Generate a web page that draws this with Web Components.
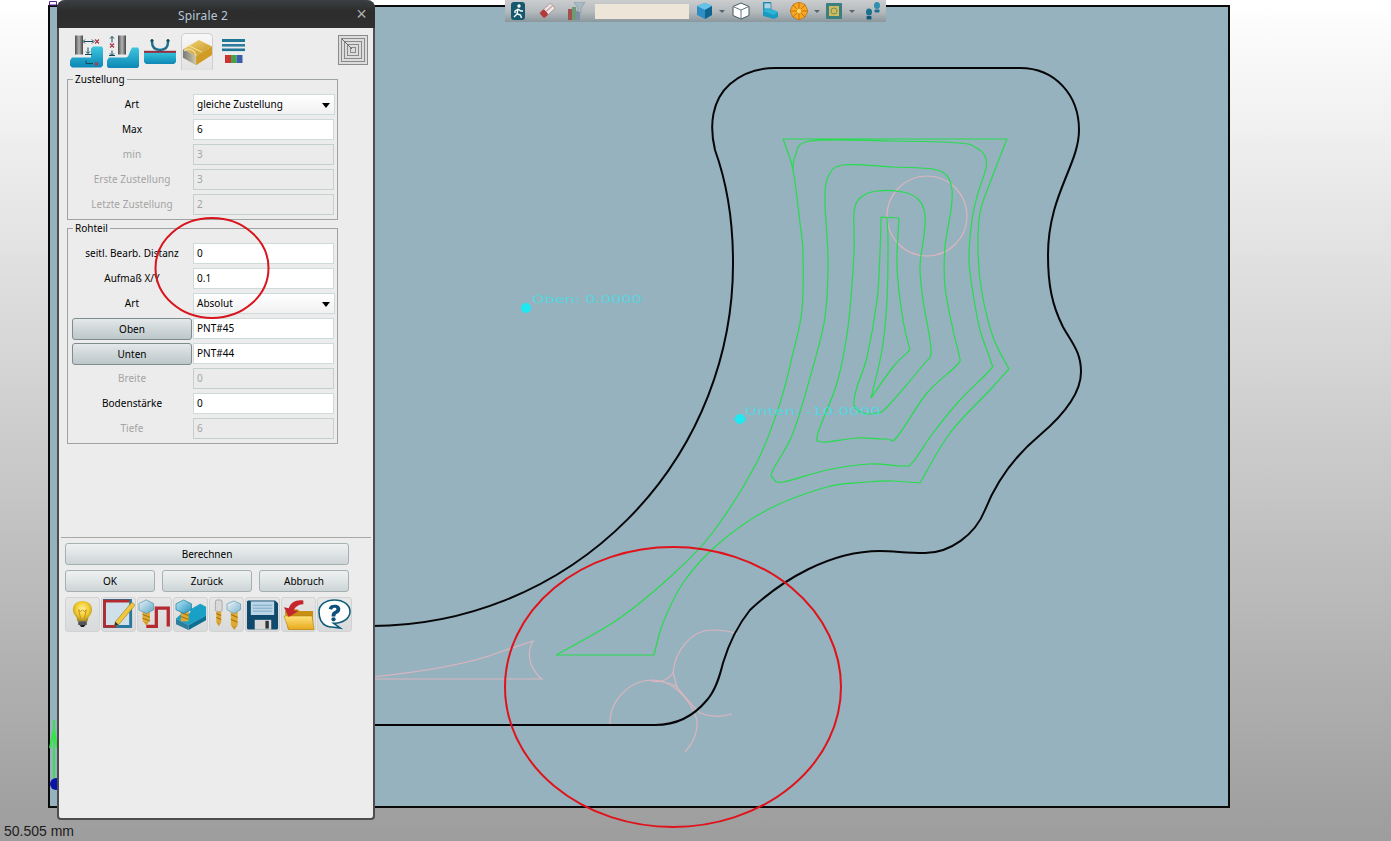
<!DOCTYPE html>
<html lang="de"><head><meta charset="utf-8"><title>Spirale 2</title>
<style>html,body{margin:0;padding:0;overflow:hidden}</style></head>
<body>
<cad-app>
  <cad-viewport></cad-viewport>
  <cad-toolbar></cad-toolbar>
  <cad-dialog heading="Spirale 2"></cad-dialog>
  <cad-status>50.505 mm</cad-status>
</cad-app>
<script>
const ICONS={
t1:`<defs><linearGradient id="b" x1="0" y1="0" x2="0" y2="1"><stop offset="0" stop-color="#3fc6de"/><stop offset="1" stop-color="#0a86b4"/></linearGradient><linearGradient id="g" x1="0" y1="0" x2="1" y2="0"><stop offset="0" stop-color="#4c4c4c"/><stop offset=".5" stop-color="#b5b5b5"/><stop offset="1" stop-color="#444"/></linearGradient></defs>
<path d="M0 25l2-3h19v-9l2-2h9l1 2v17l-2 2H2l-2-2z" fill="url(#b)"/><rect x="5" y="0" width="8" height="19" fill="url(#g)"/>
<path d="M14 6h9M22 4l2 2-2 2M15 4l-2 2 2 2M18 12v6M16 16l2 2 2-2M15 19h7M16 25v3h7" stroke="#154a5c" stroke-width="1" fill="none"/>
<path d="M25 4l4 4m0-4l-4 4M25 27l3 3m0-3l-3 3" stroke="#a83a4c" stroke-width="1.3"/>`,
t2:`<defs><linearGradient id="b" x1="0" y1="0" x2="0" y2="1"><stop offset="0" stop-color="#3fc6de"/><stop offset="1" stop-color="#0a86b4"/></linearGradient><linearGradient id="g" x1="0" y1="0" x2="1" y2="0"><stop offset="0" stop-color="#4c4c4c"/><stop offset=".5" stop-color="#b5b5b5"/><stop offset="1" stop-color="#444"/></linearGradient></defs>
<path d="M0 25l2-3h17l2-1 2-5 2-4h6l1 2v17l-2 2H2l-2-2z" fill="url(#b)"/><rect x="11" y="0" width="8" height="19" fill="url(#g)"/>
<path d="M5 1v6M3 3l2-2 2 2M5 15v5M3 18l2 2 2-2M2 20h6" stroke="#154a5c" stroke-width="1" fill="none"/>
<path d="M3 8l4 4m0-4l-4 4" stroke="#a83a4c" stroke-width="1.3"/>`,
t3:`<defs><linearGradient id="b" x1="0" y1="0" x2="0" y2="1"><stop offset="0" stop-color="#36c4dc"/><stop offset="1" stop-color="#0c88b4"/></linearGradient></defs>
<path d="M0 13h32v10l-2 2H2l-2-2z" fill="url(#b)"/><rect x="0" y="11.800" width="32" height="2" fill="#9c2a3c"/>
<path d="M8 1v2c0 6 4 8 8 8s8-2 8-8V1" fill="none" stroke="#1d6f8c" stroke-width="2.400"/><circle cx="8" cy="1.500" r="1.500" fill="#12485e"/><circle cx="24" cy="1.500" r="1.500" fill="#12485e"/>`,
t4:`<defs><linearGradient id="y" x1="0" y1="0" x2="1" y2="1"><stop offset="0" stop-color="#f2d87a"/><stop offset="1" stop-color="#c6921e"/></linearGradient><linearGradient id="s" x1="0" y1="0" x2="1" y2="0"><stop offset="0" stop-color="#777"/><stop offset="1" stop-color="#d0c8a8"/></linearGradient></defs>
<path d="M1 12L18 2l14 7-17 10z" fill="url(#y)"/><path d="M15 19l17-10v9L15 29z" fill="#d09c24"/><path d="M1 12l14 7v10L1 21z" fill="url(#s)"/>
<path d="M2 14c5-4 11-2 13 5" fill="none" stroke="#e9dda8" stroke-width="1.200"/><path d="M7 8l14 7" stroke="#f8eaa8" stroke-width="1"/>`,
t5:`<rect x="0" y="0" width="23" height="3" fill="#1f7596"/><rect x="0" y="5" width="23" height="2.600" fill="#2d7f9f"/><rect x="0" y="9.500" width="23" height="2.600" fill="#1f7596"/>
<rect x="3" y="16" width="6" height="8" fill="#cc3333"/><rect x="9" y="16" width="5.500" height="8" fill="#48a048"/><rect x="14.500" y="16" width="6" height="8" fill="#3a5eaa"/>`,
spiral:`<rect x=".5" y=".5" width="29" height="29" fill="#dcdcdc" stroke="#8b8b8b"/><g fill="none" stroke="#8a8a8a"><rect x="3.500" y="3.500" width="23" height="23"/><rect x="6.500" y="6.500" width="17" height="17"/><rect x="9.500" y="9.500" width="11" height="11"/><rect x="12.500" y="12.500" width="5" height="5"/></g><path d="M4 4l10 10" stroke="#666"/>`,
bulb:`<defs><radialGradient id="y" cx=".5" cy=".4" r=".6"><stop offset="0" stop-color="#fff29a"/><stop offset=".6" stop-color="#f0c92c"/><stop offset="1" stop-color="#a88a1e"/></radialGradient></defs>
<path d="M12 1c6 0 10 4 10 9 0 4-3 6-4 9-.4 1-.5 2-.5 3h-11c0-1-.1-2-.5-3-1-3-4-5-4-9 0-5 4-9 10-9z" fill="url(#y)"/><path d="M8 10l2 9M16 10l-2 9M8 10l2 2 2-2 2 2 2-2" stroke="#c98a1c" fill="none"/>
<rect x="7.500" y="22" width="9" height="4" fill="#555"/><path d="M9 26h6l-1.500 2h-3z" fill="#222"/>`,
sketch:`<rect x="1" y="1" width="28" height="28" fill="#1f6f95"/><rect x="3.500" y="3.500" width="23" height="23" fill="#cfe0ea"/>
<path d="M2.500 28V3h24" fill="none" stroke="#b52a30" stroke-width="2.600"/><path d="M2 27.500h12" stroke="#b52a30" stroke-width="2.600"/><path d="M14 27.500h14V4" fill="none" stroke="#2a78a0" stroke-width="2.400"/>
<path d="M13 23L29 4l3 3-16 19-4 1z" fill="#f1c63a" stroke="#9b7c1c" stroke-width=".6"/><path d="M13 23l3 3-4 1z" fill="#333"/>`,
mill:`<defs><linearGradient id="n" x1="0" y1="0" x2="1" y2="1"><stop offset="0" stop-color="#e8f2f6"/><stop offset="1" stop-color="#5fa8c8"/></linearGradient></defs>
<path d="M9 30H20V10H33V30" fill="none" stroke="#b52a30" stroke-width="3.600"/>
<rect x="5" y="14" width="8" height="11" fill="#e2a92c"/><path d="M5 17l8 3M5 21l8 3" stroke="#946a14"/><path d="M6 25h6l-3 4z" fill="#d49a24"/>
<path d="M1 5l8-4 8 4v7l-8 4-8-4z" fill="url(#n)" stroke="#4f8ea8" stroke-width=".7"/>`,
millblock:`<defs><linearGradient id="n" x1="0" y1="0" x2="1" y2="1"><stop offset="0" stop-color="#bfeaf6"/><stop offset="1" stop-color="#1d90bc"/></linearGradient></defs>
<path d="M1 20l13 7 18-10V8l-6-3-9 5-2 5-6-2z" fill="#19a0c6"/><path d="M14 27v5l18-10v-5z" fill="#0f6f92"/><path d="M1 20v6l13 6v-5z" fill="#2b7e9c"/>
<rect x="6" y="11" width="8" height="12" fill="#e2a92c"/><path d="M6 14l8 3M6 18l8 3" stroke="#946a14"/>
<path d="M1 5l8-4 8 4v6l-8 4-8-4z" fill="url(#n)" stroke="#1d7da0" stroke-width=".7"/>`,
twomill:`<defs><linearGradient id="n" x1="0" y1="0" x2="1" y2="1"><stop offset="0" stop-color="#f0f6f8"/><stop offset="1" stop-color="#7fb4cc"/></linearGradient></defs>
<rect x="4" y="1" width="7" height="12" rx="2" fill="#d8d8d8" stroke="#888" stroke-width=".6"/><rect x="5" y="13" width="5" height="11" fill="#e0a52c"/><path d="M5 15l5 2M5 19l5 2" stroke="#946a14"/><path d="M5 24h5l-2.500 4z" fill="#d49a24"/>
<rect x="20" y="13" width="7" height="14" fill="#e2a92c"/><path d="M20 16l7 3M20 21l7 3" stroke="#946a14"/><path d="M20 27h7l-3.500 5z" fill="#d49a24"/>
<path d="M16 5l7-3 7 3v6l-7 4-7-4z" fill="url(#n)" stroke="#5f9cb8" stroke-width=".7"/>`,
floppy:`<path d="M2 1h28l3 3v26l-1 1H2l-1-1V2z" fill="#0f4a6c"/><rect x="5" y="2" width="24" height="14" fill="#bcd6e8"/><path d="M7 6h20M7 9h20M7 12h20" stroke="#7aa7c4"/>
<rect x="9" y="21" width="17" height="10" fill="#d8d8d8"/><rect x="20" y="22" width="3.500" height="8" fill="#333"/>`,
folder:`<defs><linearGradient id="f" x1="0" y1="0" x2="0" y2="1"><stop offset="0" stop-color="#ffe27a"/><stop offset="1" stop-color="#e6a91a"/></linearGradient></defs>
<path d="M3 13l2-3h11l2 2h14v19H6z" fill="#c98f14"/><path d="M2 17h29l2 14H7z" fill="url(#f)" stroke="#b37f12" stroke-width=".6"/>
<path d="M22 1c-8-1-13 2-15 8L2 8l5 10 10-6-5-1c2-4 6-6 10-6z" fill="#c4262c"/>`,
help:`<path d="M17 1c9 0 16 5 16 12s-7 12-16 12l-1 0 7 5-9-1c-2 0-4-1-5-1C4 26 1 20 1 13 1 6 8 1 17 1z" fill="#fff" stroke="#0f5a78" stroke-width="1.600"/><path d="M11 10c1-3 3-4 6-4 4 0 6 2 6 4.500s-2 4-4 5c-1 .6-1 1.200-1 2.500h-4c0-3 .7-4 3-5.500 1-.7 2-1 2-2s-1-1.500-2-1.500-2 .5-2.500 2z" fill="#0c4f78"/><circle cx="16" cy="21" r="2.200" fill="#0c4f78"/>`,
runner:`<rect x="1" y="0" width="14" height="18" rx="3" fill="#14586e"/><circle cx="9" cy="4" r="1.700" fill="#fff"/><path d="M8 7L5 9v2M8 7l3 2 2 0M8 7l-1 5-3 3M7.500 12l3 1 1 3" fill="none" stroke="#fff" stroke-width="1.400"/>`,
eraser:`<g transform="rotate(-42 9 9)"><rect x="2" y="5.500" width="15" height="7" rx="1.500" fill="#efe6e6" stroke="#8b6a6a" stroke-width=".5"/><rect x="2" y="5.500" width="6" height="7" rx="1.500" fill="#b23a3c"/><rect x="8" y="8" width="9" height="1.500" fill="#c9a8a8"/></g>`,
chart:`<rect x="0" y="7" width="4" height="11" fill="#a0524c"/><rect x="4" y="5" width="4" height="13" fill="#6f9a78"/><rect x="8" y="9" width="4" height="9" fill="#7d8fa6"/><path d="M6 0h11l-4 6v5l-3-1V6z" fill="#a9bcc4" stroke="#7e9098" stroke-width=".6"/>`,
cubeblue:`<path d="M9 1l7 3v9l-7 4-8-4V4z" fill="#2c8ec4"/><path d="M9 1l7 3-7 4-8-4z" fill="#65c3ea"/><path d="M9 8l7-4v9l-7 4z" fill="#12648f"/>`,
cubewhite:`<path d="M9 1l8 3.500v9L9 17l-8-3.500v-9z" fill="#fff" stroke="#475a62"/><path d="M1 4.500L9 8l8-3.500M9 8v9" fill="none" stroke="#64767e"/>`,
block:`<path d="M2 0h8v7l7 3v5l-4 2-11-3z" fill="#1a9ac0"/><rect x="3" y="1" width="7" height="6" fill="#a8d4e6" stroke="#186a88" stroke-width=".6"/><path d="M2 9l11 4 4-3-2-1-9-3z" fill="#2fb4d8"/>`,
wheel:`<path d="M9 0l6 2.500L18 9l-3 6-6 3-6-3L0 9l3-6.500z" fill="#f5a91e" stroke="#b86a12" stroke-width=".7"/><path d="M9 0v18M0 9h18M3 3l12 12M15 3L3 15" stroke="#b8561a" stroke-width=".7"/><circle cx="9" cy="9" r="2.200" fill="#ffd866"/>`,
frame:`<rect x="1" y="1" width="16" height="16" rx="1" fill="#3b7f80"/><rect x="4" y="4" width="10" height="10" fill="#cdbb5c"/><circle cx="9" cy="9" r="3" fill="none" stroke="#7a8c5c"/>`,
steps:`<ellipse cx="13" cy="3.500" rx="3" ry="3.500" fill="#2f8fae"/><rect x="10.500" y="7.500" width="5" height="3" rx="1" fill="#1a7091"/><ellipse cx="5" cy="10" rx="3" ry="3.500" fill="#1a7091"/><rect x="2.500" y="14" width="5" height="3.500" rx="1" fill="#0f5a78"/>`
};
const VB={t1:'0 0 33 32',t2:'0 0 32 32',t3:'0 0 32 25',t4:'0 0 32 32',t5:'0 0 24 24',spiral:'0 0 30 30',bulb:'0 0 24 30',sketch:'0 0 32 32',mill:'0 0 36 34',millblock:'0 0 33 33',twomill:'0 0 32 33',floppy:'0 0 34 32',folder:'0 0 34 32',help:'0 0 34 32'};
class CadIcon extends HTMLElement{connectedCallback(){
  const n=this.getAttribute('name'),w=this.getAttribute('w')||18,h=this.getAttribute('h')||18;
  this.attachShadow({mode:'open'}).innerHTML=`<style>:host{display:block;width:${w}px;height:${h}px;line-height:0}svg{display:block;width:100%;height:100%}</style><svg viewBox="${VB[n]||'0 0 18 18'}" aria-hidden="true">${ICONS[n]}</svg>`;
}}
customElements.define('cad-icon',CadIcon);

class CadApp extends HTMLElement{constructor(){super();this.attachShadow({mode:'open'}).innerHTML=`<style>:host{display:block;position:relative;width:1391px;height:841px;overflow:hidden;background:linear-gradient(#fff,#9d9d9d);font-family:"Noto Sans",sans-serif}</style><slot></slot>`}}
customElements.define('cad-app',CadApp);

function smooth(p){let d=`M${p[0]} ${p[1]}`;const n=p.length/2,P=i=>{i=Math.max(0,Math.min(n-1,i));return[p[2*i],p[2*i+1]]};
  for(let i=0;i<n-1;i++){const a=P(i-1),b=P(i),c=P(i+1),e=P(i+2);
    d+=`C${(b[0]+(c[0]-a[0])/6).toFixed(1)} ${(b[1]+(c[1]-a[1])/6).toFixed(1)} ${(c[0]-(e[0]-b[0])/6).toFixed(1)} ${(c[1]-(e[1]-b[1])/6).toFixed(1)} ${c[0]} ${c[1]}`}
  return d}
const GREEN=[
 [556,655,617,620,670,577,713,532,757,462,780,403,793,353,802,310,803,253,800,223,793,170,783,139],
 [783,139,1007,139],
 [1007,139,990,183,980,213,978,253,982,293,993,337,1009,369],
 [1009,369,990,390,950,433,920,483],
 [920,483,893,481,867,482,827,487,767,510,717,545,683,583,663,623,654,655],
 [654,655,556,655],
 [793,170,795,157,810,141,893,141,960,143,975,147,985,156,986,168,978,193,972,220,969,260,973,293,980,330,991,362,990,370,960,400,933,433,913,462,903,466,870,464,827,470,783,482,773,478,773,470,793,433,813,367,825,317,828,260,825,203,828,177,843,165,893,167,933,169,947,176,952,190,951,210,945,247,945,287,953,330,959,355,957,365,927,393,897,437,887,439,857,438,823,442,818,433,837,383,848,327,854,253,854,213,860,198,877,191,903,192,919,200,925,215,924,235,920,267,923,300,931,350,923,365,887,407,877,413,863,413,854,405,857,387,867,357,877,300,880,253,881,217],
 [881,217,899,218],
 [899,218,897,267,903,320,910,350],
 [910,350,893,367,871,398],
 [871,398,882,350,887,300,888,243,887,218]
];
const BLACK="M372 626A362 362 0 0 0 733 262C733 210 724 175 715 150C709 125 712 100 730 84C745 71 760 68 775 68L1020 68C1055 68 1079 95 1079 130C1079 165 1048 195 1048 255C1048 285 1052 305 1063 327C1072 343 1081 352 1081 372C1081 395 1060 418 1040 435C1010 460 995 485 985 510C975 535 950 553 925 553C905 553 895 551 880 551C830 551 782 580 750 610C738 625 729 643 723 663C720 675 716 690 707 700C693 717 675 725 655 725L372 725";
class CadViewport extends HTMLElement{constructor(){super();
  const g=GREEN.map(smooth).join('');
  this.attachShadow({mode:'open'}).innerHTML=`<style>
  :host{display:block;position:absolute;left:48px;top:5px;width:1178px;height:799px;border:2px solid #0a0a0a;background:#95b2be}
  svg{display:block;width:100%;height:100%;overflow:visible}
  text{font-family:"DejaVu Sans",sans-serif;font-size:11px;fill:#35e8f0;opacity:.62}
  </style><svg viewBox="50 7 1178 799">
  <g fill="none" stroke="#dcb5bf" stroke-width="1.200">
    <circle cx="927" cy="216" r="40"/>
    <path d="M610 725C609 700 630 680 653 680C672 680 690 698 697 720C698 733 692 745 685 752"/>
    <path d="M673 673C675 650 692 630 712 630C722 630 730 631 737 634"/>
    <path d="M677 687C685 697 692 706 700 713C710 717 722 717 732 714"/>
    <path d="M651 681C660 683 668 680 673 673C675 678 675 682 677 687C670 682 660 681 651 681"/>
    <path d="M372 677C420 672 470 664 500 652L533 641C529 648 528 655 531 664C534 671 538 676 542 679H372"/>
  </g>
  <path d="${g}" fill="none" stroke="#27dc4c" stroke-width="1.200" stroke-linejoin="round"/>
  <path d="${BLACK}" fill="none" stroke="#060608" stroke-width="2" stroke-linejoin="round"/>
  <text x="532" y="303" textLength="110" lengthAdjust="spacingAndGlyphs">Oben: 0.0000</text>
  <text x="745" y="415" textLength="136" lengthAdjust="spacingAndGlyphs">Unten: -10.0000</text>
  <g fill="#1fe9f2"><circle cx="526" cy="308" r="5"/><path d="M521 308l5-3 5 3-5 3z"/><circle cx="740" cy="419" r="5"/><path d="M733 419l7-3 7 3-7 3z"/></g>
  <path d="M54 720L54 778M50 748L54 728L57 748" stroke="#37e24c" stroke-width="2" fill="none"/>
  <circle cx="56" cy="784" r="6" fill="#0a14a6"/>
  <path d="M49.500 1.500h7v3.500h-7z" fill="#fff" stroke="#5a1ea0"/>
  <ellipse cx="673" cy="687" rx="168" ry="140" fill="none" stroke="#e0121a" stroke-width="2"/>
  </svg>`}}
customElements.define('cad-viewport',CadViewport);

class CadToolbar extends HTMLElement{constructor(){super();
  const ic=(n,m)=>`<cad-icon name="${n}" style="margin-left:${m}px"></cad-icon>`,dr=m=>`<i style="margin-left:${m}px"></i>`;
  this.attachShadow({mode:'open'}).innerHTML=`<style>
  :host{display:flex;align-items:center;position:absolute;left:505px;top:0;width:381px;height:22px;background:linear-gradient(#cbcdce,#b4b9bc 55%,#8a979d)}
  b{display:block;width:94px;height:15px;margin-left:9px;background:#ede6d8}
  i{display:block;width:0;height:0;border:3px solid transparent;border-top:3px solid #55666e;border-bottom:0}
  </style>${ic('runner',5)}${ic('eraser',10)}${ic('chart',12)}<b></b>${ic('cubeblue',7)}${dr(5)}${ic('cubewhite',7)}${ic('block',11)}${ic('wheel',11)}${dr(6)}${ic('frame',5)}${dr(6)}${ic('steps',9)}`}}
customElements.define('cad-toolbar',CadToolbar);

class CadGroup extends HTMLElement{constructor(){super();this.attachShadow({mode:'open'}).innerHTML=`<style>
  :host{display:block;position:relative;width:269px;border:1px solid #9da3a3;margin-left:8px;padding-top:var(--pt,14px);color:#000}
  span{position:absolute;left:5px;top:-7px;padding:0 2px;background:#ececec;line-height:13px}
  </style><span></span><slot></slot>`}
  connectedCallback(){this.shadowRoot.querySelector('span').textContent=this.getAttribute('heading')}}
customElements.define('cad-group',CadGroup);

const BTN=`background:linear-gradient(#eef1f1,#dfe4e5 50%,#cdd4d6);border:1px solid #a4b0b2;border-radius:3px;box-sizing:border-box;display:flex;align-items:center;justify-content:center;color:#000;`;
class CadButton extends HTMLElement{constructor(){super();this.attachShadow({mode:'open'}).innerHTML=`<style>:host{${BTN}height:22px}</style><slot></slot>`}}
customElements.define('cad-button',CadButton);

class CadField extends HTMLElement{constructor(){super();this.attachShadow({mode:'open'})}
  connectedCallback(){
  const t=this.getAttribute('type')||'text',v=this.getAttribute('value')||'';
  const lab=t==='button'?`<cad-button class="btn"><slot></slot></cad-button>`:`<div class="lab"><slot></slot></div>`;
  this.shadowRoot.innerHTML=`<style>
  :host{display:grid;grid-template-columns:120px 141px;column-gap:1px;height:25px;margin-left:4px;align-items:start;color:#000}
  .lab{height:19px;display:flex;align-items:center;justify-content:center;white-space:nowrap;letter-spacing:.05px}
  .btn{border-color:#7f8c8e;background:linear-gradient(#e4e9ea,#cdd5d7 55%,#bdc7c9);height:22px}
  .c{height:21px;box-sizing:border-box;border:1px solid #cfdadb;background:#fff;display:flex;align-items:center;padding:0 0 1px 3px;color:#000}
  :host([type=disabled]) .lab{color:#a4a4a4}
  :host([type=disabled]) .c{background:#ebebeb;color:#a4a4a4;border-color:#c4d0d0}
  :host([type=select]) .c{background:linear-gradient(#fff,#f1f1f1);width:142px;position:relative}
  :host([type=select]) .c::after{content:"";position:absolute;right:4px;top:8px;border:4px solid transparent;border-top:5px solid #000;border-bottom:0}
  </style>${lab}<div class="c">${v}</div>`;
}}
customElements.define('cad-field',CadField);

class CadDialog extends HTMLElement{constructor(){super();this.attachShadow({mode:'open'})}
  connectedCallback(){this.shadowRoot.innerHTML=`<style>
  :host{display:flex;flex-direction:column;position:absolute;left:57px;top:0;width:318px;height:820px;box-sizing:border-box;border:2px solid #4d4d4d;border-top:0;border-radius:8px 8px 4px 4px;background:#ececec;font-size:10px;color:#000;overflow:visible}
  .title{height:28px;margin:0 -2px;background:linear-gradient(#3c4044,#2c2c2c 40%,#303030);border-radius:8px 8px 0 0;display:flex;align-items:center;justify-content:center;color:#b6c8d8;font-size:12px;letter-spacing:.2px;position:relative;padding:2px 26px 0 0;box-sizing:border-box;flex:none}
  .x{position:absolute;right:8px;top:5px;color:#b0b0b0;font-size:18px;line-height:18px;font-family:"Liberation Sans",sans-serif}
  .tabs{display:flex;align-items:flex-start;height:37px;margin:5px 0 9px;padding-left:11px}
  .tabs cad-icon{margin-top:2px}
  .tab{width:32px;height:37px;box-sizing:border-box;border:1px solid #cfcfcf;border-bottom:0;border-radius:5px 5px 0 0;background:linear-gradient(#f8f8f8,#e2e2e2);margin-left:5px;flex:none}
  .tab cad-icon{margin-top:4px}
  .rh{margin-top:8px}
  hr{margin:93px 2px 0;height:1px;border:0;background:#a8a8a8}
  .wide{margin:5px 0 0 6px;width:284px}
  .three{display:grid;grid-template-columns:repeat(3,90px);column-gap:7px;margin:5px 0 0 6px;width:284px}
  .tools{display:flex;margin:5px 0 0 6px;gap:1px}
  .tool{width:35px;height:35px;box-sizing:border-box;border:1px solid #d2d2d2;border-radius:3px;background:linear-gradient(#e6e6e6,#d8dadb);display:flex;align-items:center;justify-content:center;flex:none}
  svg.mark{position:absolute;left:95px;top:216px;overflow:visible;pointer-events:none}
  </style>
  <div class="title"><span>${this.getAttribute('heading')}</span><span class="x">×</span></div>
  <div class="tabs">
    <cad-icon name="t1" w="33" h="33"></cad-icon>
    <cad-icon name="t2" w="32" h="33" style="margin-left:4px"></cad-icon>
    <cad-icon name="t3" w="32" h="25" style="margin-left:5px;margin-top:6px"></cad-icon>
    <div class="tab"><cad-icon name="t4" w="30" h="30"></cad-icon></div>
    <cad-icon name="t5" w="24" h="26" style="margin-left:9px;margin-top:5px"></cad-icon>
    <cad-icon name="spiral" w="30" h="30" style="margin-left:92px"></cad-icon>
  </div>
  <cad-group heading="Zustellung">
    <cad-field type="select" value="gleiche Zustellung">Art</cad-field>
    <cad-field value="6">Max</cad-field>
    <cad-field type="disabled" value="3">min</cad-field>
    <cad-field type="disabled" value="3">Erste Zustellung</cad-field>
    <cad-field type="disabled" value="2">Letzte Zustellung</cad-field>
  </cad-group>
  <cad-group heading="Rohteil" class="rh">
    <cad-field value="0">seitl. Bearb. Distanz</cad-field>
    <cad-field value="0.1">Aufmaß X/Y</cad-field>
    <cad-field type="select" value="Absolut">Art</cad-field>
    <cad-field type="button" value="PNT#45">Oben</cad-field>
    <cad-field type="button" value="PNT#44">Unten</cad-field>
    <cad-field type="disabled" value="0">Breite</cad-field>
    <cad-field value="0">Bodenstärke</cad-field>
    <cad-field type="disabled" value="6">Tiefe</cad-field>
  </cad-group>
  <hr>
  <cad-button class="wide">Berechnen</cad-button>
  <div class="three"><cad-button>OK</cad-button><cad-button>Zurück</cad-button><cad-button>Abbruch</cad-button></div>
  <div class="tools">
    <div class="tool"><cad-icon name="bulb" w="23" h="29"></cad-icon></div>
    <div class="tool"><cad-icon name="sketch" w="33" h="33"></cad-icon></div>
    <div class="tool"><cad-icon name="mill" w="34" h="33"></cad-icon></div>
    <div class="tool"><cad-icon name="millblock" w="32" h="32"></cad-icon></div>
    <div class="tool"><cad-icon name="twomill" w="32" h="32"></cad-icon></div>
    <div class="tool"><cad-icon name="floppy" w="33" h="32"></cad-icon></div>
    <div class="tool"><cad-icon name="folder" w="33" h="32"></cad-icon></div>
    <div class="tool"><cad-icon name="help" w="33" h="31"></cad-icon></div>
  </div>
  <svg class="mark" width="116" height="104" viewBox="0 0 116 104" aria-hidden="true"><ellipse cx="58" cy="52" rx="56.500" ry="50" fill="none" stroke="#d8141c" stroke-width="2"/></svg>`;
}}
customElements.define('cad-dialog',CadDialog);

class CadStatus extends HTMLElement{constructor(){super();this.attachShadow({mode:'open'}).innerHTML=`<style>:host{display:block;position:absolute;left:4px;top:823px;font:14px/16px "Liberation Sans",sans-serif;color:#1c1c1c}</style><slot></slot>`}}
customElements.define('cad-status',CadStatus);
</script>
</body></html>
